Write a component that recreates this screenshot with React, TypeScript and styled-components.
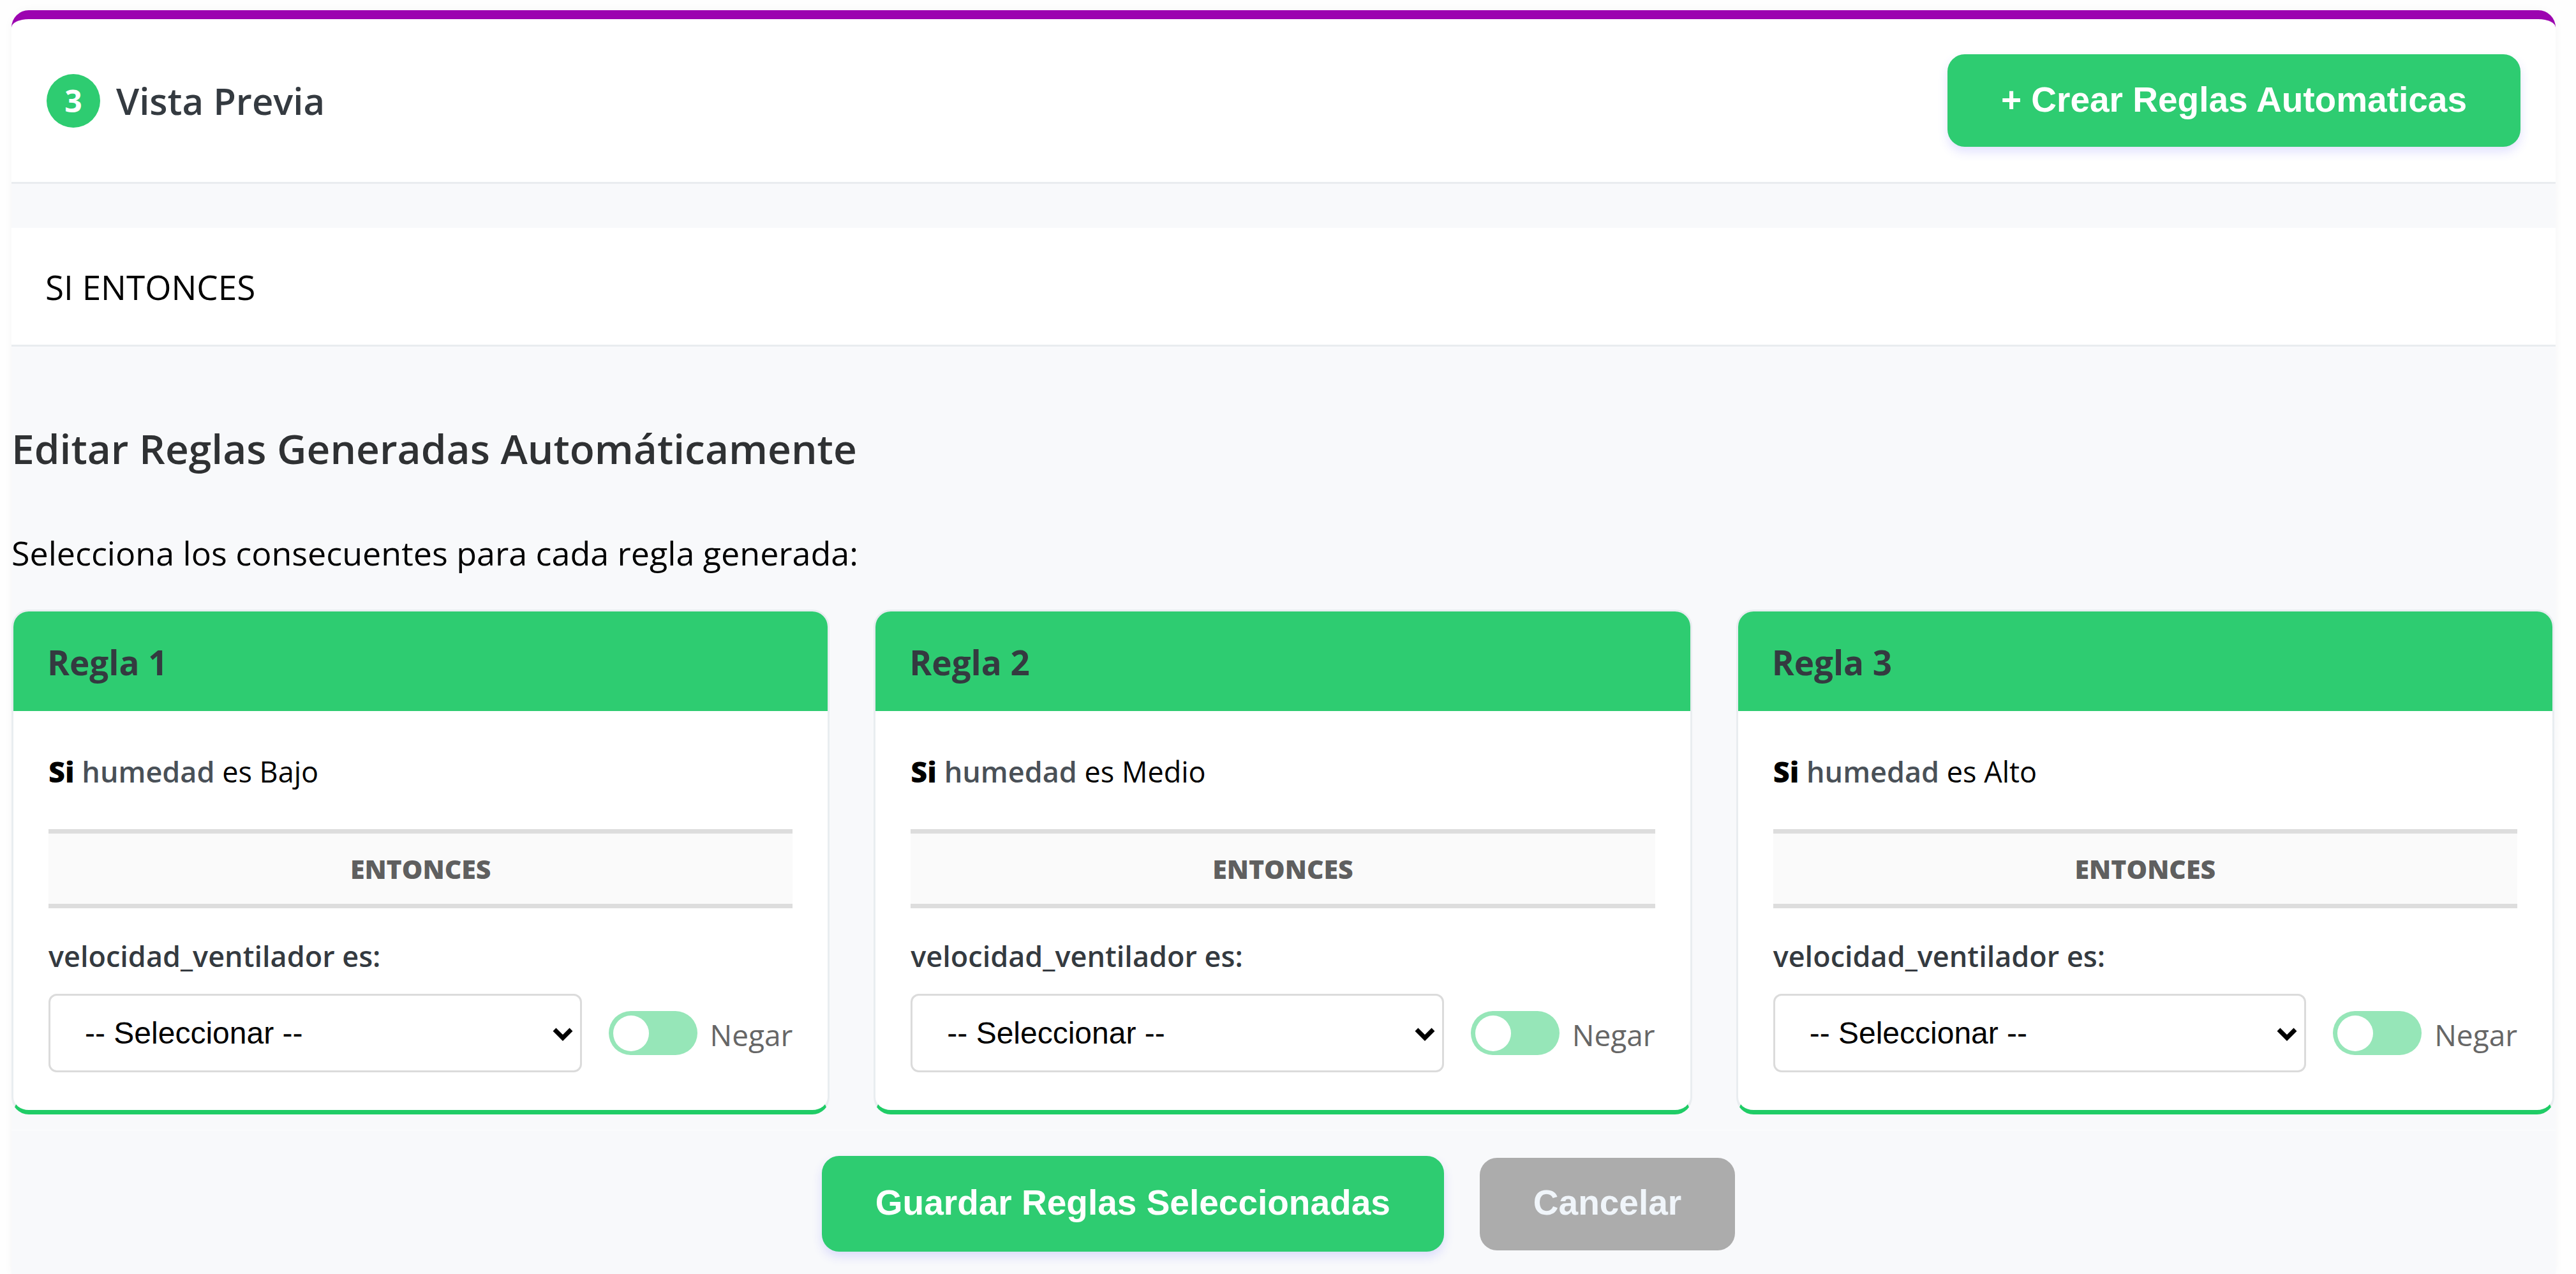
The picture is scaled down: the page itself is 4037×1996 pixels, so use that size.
import React, { useState } from "react";
import styled, { createGlobalStyle } from "styled-components";

const GREEN = "#2ecc71";
const UI_FONT = '"Open Sans", "Noto Sans", sans-serif';
const CONTROL_FONT = '"Liberation Sans", Arial, sans-serif';

const GlobalStyle = createGlobalStyle`
  *, *::before, *::after { box-sizing: border-box; }
  body {
    margin: 0;
    background: #fefefe;
    color: #000;
    font-family: ${UI_FONT};
  }
`;

const Page = styled.main`
  display: flex;
  flex-direction: column;
  min-height: 100vh;
  padding: 16px 32px 0 18px;
`;

const Panel = styled.section`
  display: flex;
  flex: 1;
  flex-direction: column;
  background: #f8f9fb;
  border-radius: 27px 27px 0 0;
  box-shadow: 0 0 14px rgba(0, 0, 0, 0.04);
`;

const PanelHeader = styled.header`
  display: flex;
  align-items: center;
  justify-content: space-between;
  padding: 55px;
  background: #fff;
  border-top: 14px solid #9c04b0;
  border-radius: 27px 27px 0 0;
  box-shadow: 0 3px 0 #e9ecef;
`;

const Title = styled.h1`
  display: flex;
  align-items: center;
  gap: 25px;
  margin: 0;
  color: #343a40;
  font-size: 58px;
  font-weight: 600;
  line-height: 84px;
`;

const StepBadge = styled.span`
  display: flex;
  align-items: center;
  justify-content: center;
  width: 84px;
  height: 84px;
  border-radius: 50%;
  background: ${GREEN};
  color: #fff;
  font-size: 48px;
  font-weight: 700;
`;

const Button = styled.button<{ $muted?: boolean; $tall?: boolean }>`
  height: ${(p) => (p.$tall ? 150 : 145)}px;
  padding: 0 84px 4px;
  border: 0;
  border-radius: 27px;
  background: ${(p) => (p.$muted ? "#acacac" : GREEN)};
  color: ${(p) => (p.$muted ? "#f0f5fa" : "#fff")};
  box-shadow: ${(p) => (p.$muted ? "none" : "0 8px 16px rgba(60, 60, 255, 0.15)")};
  font-family: ${CONTROL_FONT};
  font-size: 55px;
  font-weight: 700;
  cursor: pointer;
`;

const Preview = styled.p`
  margin: 72px 0 0;
  padding: 56px 53px 53px;
  background: #fff;
  border-bottom: 3px solid #e9ecef;
  font-size: 53px;
  line-height: 74px;
`;

const Intro = styled.div`
  margin: 116px 0 53px;
`;

const Heading = styled.h2`
  margin: 0 0 83px;
  color: #2f3133;
  font-size: 64px;
  font-weight: 600;
  line-height: 88px;
`;

const Hint = styled.p`
  margin: 0;
  font-size: 52px;
  line-height: 72px;
`;

const Rules = styled.div`
  display: grid;
  grid-template-columns: repeat(3, minmax(0, 1fr));
  gap: 69px;
  padding-right: 2px;
`;

const Card = styled.article`
  background: #fff;
  border: 3px solid #e9edf0;
  border-bottom: 7px solid #1fcc66;
  border-radius: 27px;
`;

const CardTitle = styled.h3`
  margin: 0;
  padding: 43px 53px 39px;
  border-radius: 24px 24px 0 0;
  background: ${GREEN};
  color: #343a40;
  font-size: 53px;
  font-weight: 700;
  line-height: 74px;
`;

const CardBody = styled.div`
  padding: 63px 55px 59px;
`;

const Condition = styled.p`
  margin: 0 0 58px;
  font-size: 45px;
  line-height: 64px;

  b { font-weight: 800; }
`;

const Variable = styled.span`
  color: #495057;
  font-weight: 600;
`;

const Then = styled.div`
  margin-bottom: 44px;
  padding: 25px;
  border: solid #ddd;
  border-width: 7px 0;
  background: #fafafa;
  color: #5f5f5f;
  font-size: 41px;
  font-weight: 800;
  line-height: 60px;
  text-align: center;
`;

const FieldLabel = styled.label`
  display: block;
  margin-bottom: 28px;
  color: #343a40;
  font-size: 45px;
  font-weight: 600;
  line-height: 62px;
`;

const FieldRow = styled.div`
  display: flex;
  align-items: center;
  gap: 42px;
`;

const SelectBox = styled.div`
  position: relative;
  flex: 1;
  min-width: 0;
`;

const Select = styled.select`
  display: block;
  width: 100%;
  height: 123px;
  padding: 0 54px;
  appearance: none;
  background: #fff;
  border: 3px solid #dbdbdb;
  border-radius: 13px;
  color: #000;
  font-family: ${CONTROL_FONT};
  font-size: 48px;
`;

const Chevron = styled.svg`
  position: absolute;
  top: 50%;
  right: 14px;
  width: 32px;
  height: 22px;
  margin-top: -10px;
  pointer-events: none;
`;

const SwitchLabel = styled.label`
  display: flex;
  align-items: center;
  gap: 20px;
  color: #666;
  font-size: 46px;
  line-height: 64px;
  cursor: pointer;
`;

const SwitchText = styled.span`
  padding-top: 4px;
`;

const Switch = styled.input`
  display: flex;
  align-items: center;
  width: 139px;
  height: 69px;
  margin: 0;
  padding: 0 7px;
  appearance: none;
  border-radius: 35px;
  background: #96e6b8;
  cursor: pointer;

  &::before {
    content: "";
    width: 56px;
    height: 56px;
    border-radius: 50%;
    background: #fff;
  }

  &:checked {
    justify-content: flex-end;
    background: ${GREEN};
  }
`;

const Footer = styled.footer`
  display: flex;
  align-items: center;
  justify-content: center;
  gap: 40px;
  margin-top: 24px;
  padding: 40px 0 35px;
  border-top: 1px solid #fdfdfe;

  ${Button} { margin-right: 16px; }
`;

const rules = [
  { id: 1, variable: "humedad", value: "Bajo" },
  { id: 2, variable: "humedad", value: "Medio" },
  { id: 3, variable: "humedad", value: "Alto" },
];

type Rule = (typeof rules)[number];

function RuleCard({ rule }: { rule: Rule }) {
  const [choice, setChoice] = useState("");
  const [negated, setNegated] = useState(false);
  const fieldId = `velocidad-${rule.id}`;

  return (
    <Card>
      <CardTitle>Regla {rule.id}</CardTitle>
      <CardBody>
        <Condition>
          <b>Si</b> <Variable>{rule.variable}</Variable> es {rule.value}
        </Condition>
        <Then>ENTONCES</Then>
        <FieldLabel htmlFor={fieldId}>velocidad_ventilador es:</FieldLabel>
        <FieldRow>
          <SelectBox>
            <Select id={fieldId} value={choice} onChange={(e) => setChoice(e.target.value)}>
              <option value="">-- Seleccionar --</option>
            </Select>
            <Chevron viewBox="0 0 32 22" aria-hidden="true">
              <path d="M3 4 L16 17 L29 4" fill="none" stroke="#000" strokeWidth="7" />
            </Chevron>
          </SelectBox>
          <SwitchLabel>
            <Switch
              type="checkbox"
              checked={negated}
              onChange={(e) => setNegated(e.target.checked)}
            />
            <SwitchText>Negar</SwitchText>
          </SwitchLabel>
        </FieldRow>
      </CardBody>
    </Card>
  );
}

export default function App() {
  return (
    <>
      <GlobalStyle />
      <Page>
        <Panel>
          <PanelHeader>
            <Title>
              <StepBadge>3</StepBadge>
              Vista Previa
            </Title>
            <Button type="button">+ Crear Reglas Automaticas</Button>
          </PanelHeader>
          <Preview>SI ENTONCES</Preview>
          <Intro>
            <Heading>Editar Reglas Generadas Automáticamente</Heading>
            <Hint>Selecciona los consecuentes para cada regla generada:</Hint>
          </Intro>
          <Rules>
            {rules.map((rule) => (
              <RuleCard key={rule.id} rule={rule} />
            ))}
          </Rules>
          <Footer>
            <Button type="button" $tall>Guardar Reglas Seleccionadas</Button>
            <Button type="button" $muted>Cancelar</Button>
          </Footer>
        </Panel>
      </Page>
    </>
  );
}
